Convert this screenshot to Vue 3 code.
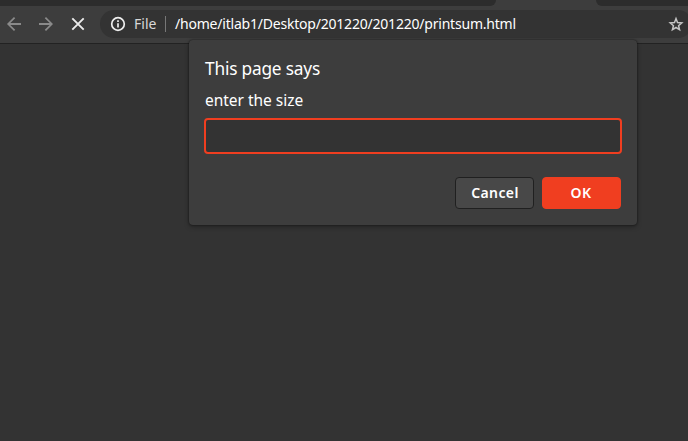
<script setup>
const address = '/home/itlab1/Desktop/201220/201220/printsum.html'
</script>

<template>
  <div class="browser">
    <div class="tabs">
      <div class="tab-group left"></div>
      <div class="active-tab"></div>
      <div class="tab-group right"></div>
    </div>
    <header class="toolbar">
      <nav class="nav">
        <svg class="icon arrow" viewBox="2.86 2.86 18.28 18.28"><path d="M20 11H7.83l5.59-5.59L12 4l-8 8 8 8 1.41-1.41L7.83 13H20z" /></svg>
        <svg class="icon arrow" viewBox="2.86 2.86 18.28 18.28"><path d="m12 4-1.41 1.41L16.17 11H4v2h12.17l-5.58 5.59L12 20l8-8z" /></svg>
        <svg class="icon stop" viewBox="0 0 16 16"><path d="m2.3 2.3 11.4 11.4M13.7 2.3 2.3 13.7" /></svg>
      </nav>
      <div class="omnibox">
        <svg class="info" viewBox="0 0 16 16">
          <circle cx="8" cy="8" r="6.3" />
          <path d="M8 7.2v4.2M8 4.3v1.6" />
        </svg>
        <span class="scheme">File</span>
        <span class="divider"></span>
        <span class="address">{{ address }}</span>
        <svg class="star" viewBox="0 0 16 16">
          <path d="m8 2.6 1.5 3.9 4.3.4-3.25 2.75 1 4.05L8 11.5l-3.55 2.2 1-4.05L2.2 6.9l4.3-.4z" />
        </svg>
      </div>
    </header>
    <main class="page">
      <section class="dialog">
        <h1 class="title">This page says</h1>
        <label class="message" for="size">enter the size</label>
        <input id="size" class="field" type="text" />
        <div class="actions">
          <button class="button">Cancel</button>
          <button class="button primary">OK</button>
        </div>
      </section>
    </main>
  </div>
</template>

<style>
body {
  background: #333;
  overflow: hidden;
}
</style>

<style scoped>
.browser {
  box-sizing: border-box;
  width: 688px;
  height: 441px;
  background: #333;
  color: #fff;
  font-family: "Noto Sans", "Open Sans", sans-serif;
  overflow: hidden;
}
.tabs {
  display: flex;
  height: 6px;
  background: #3d3d3d;
}
.tab-group { background: #2c2c2c; }
.left { width: 496px; border-bottom-right-radius: 7px; }
.active-tab { width: 100px; }
.right { flex: 1; border-bottom-left-radius: 7px; }
.toolbar {
  box-sizing: border-box;
  display: flex;
  height: 38px;
  padding-top: 4px;
  background: #3d3d3d;
  border-bottom: 1px solid #222;
}
.nav {
  box-sizing: border-box;
  display: flex;
  flex: none;
  align-items: center;
  gap: 16px;
  width: 100px;
  height: 28px;
  padding-left: 6px;
}
.icon { width: 16px; height: 16px; flex: none; }
.arrow { fill: #8a8a8a; }
.stop { fill: none; stroke: #ececec; stroke-width: 1.9; }
.omnibox {
  box-sizing: border-box;
  display: flex;
  align-items: center;
  width: 592px;
  flex: none;
  height: 28px;
  padding-left: 10px;
  border-radius: 14px;
  background: #333;
  font-size: 14px;
  line-height: 28px;
  white-space: nowrap;
}
.info { width: 16px; height: 16px; flex: none; fill: none; stroke: #eee; stroke-width: 1.7; }
.scheme { width: 23px; margin-left: 8px; font-size: 14px; color: #d8d8d8; }
.divider { width: 1px; height: 16px; margin: 0 9px 0 8px; background: #777; }
.address { width: 341px; letter-spacing: -0.21px; }
.star {
  width: 16px;
  height: 16px;
  flex: none;
  margin-left: 152px;
  fill: none;
  stroke: #c4c4c4;
  stroke-width: 1.5;
}
.page { display: flex; height: 397px; }
.dialog {
  box-sizing: border-box;
  width: 448px;
  height: 185px;
  margin: -4px 0 0 189px;
  padding: 16px;
  border-radius: 4px;
  background: #3d3d3d;
  box-shadow: 0 0 2px rgba(0, 0, 0, 0.65), 0 2px 5px rgba(0, 0, 0, 0.3);
  z-index: 1;
}
.title { margin: 0; height: 26px; font-size: 17.3px; line-height: 25px; font-weight: 400; letter-spacing: -0.2px; }
.message { display: block; height: 36px; font-size: 15.5px; line-height: 37px; letter-spacing: -0.02px; }
.field {
  box-sizing: border-box;
  display: block;
  width: 418px;
  height: 36px;
  margin-left: -1px;
  border: 2px solid #f03e20;
  border-radius: 4px;
  background: #333;
  color: #fff;
  outline: none;
}
.actions { display: flex; justify-content: flex-end; gap: 8px; margin-top: 23px; }
.button {
  box-sizing: border-box;
  width: 79px;
  height: 32px;
  padding: 0 0 1px 1px;
  border: 1px solid #202020;
  border-radius: 4px;
  background: #484848;
  color: #fff;
  font: 600 14px/29px "Noto Sans", "Open Sans", sans-serif;
  letter-spacing: 0.4px;
}
.primary { padding: 0 1px 1px 0; border-color: #f03e20; background: #f03e20; }
</style>
